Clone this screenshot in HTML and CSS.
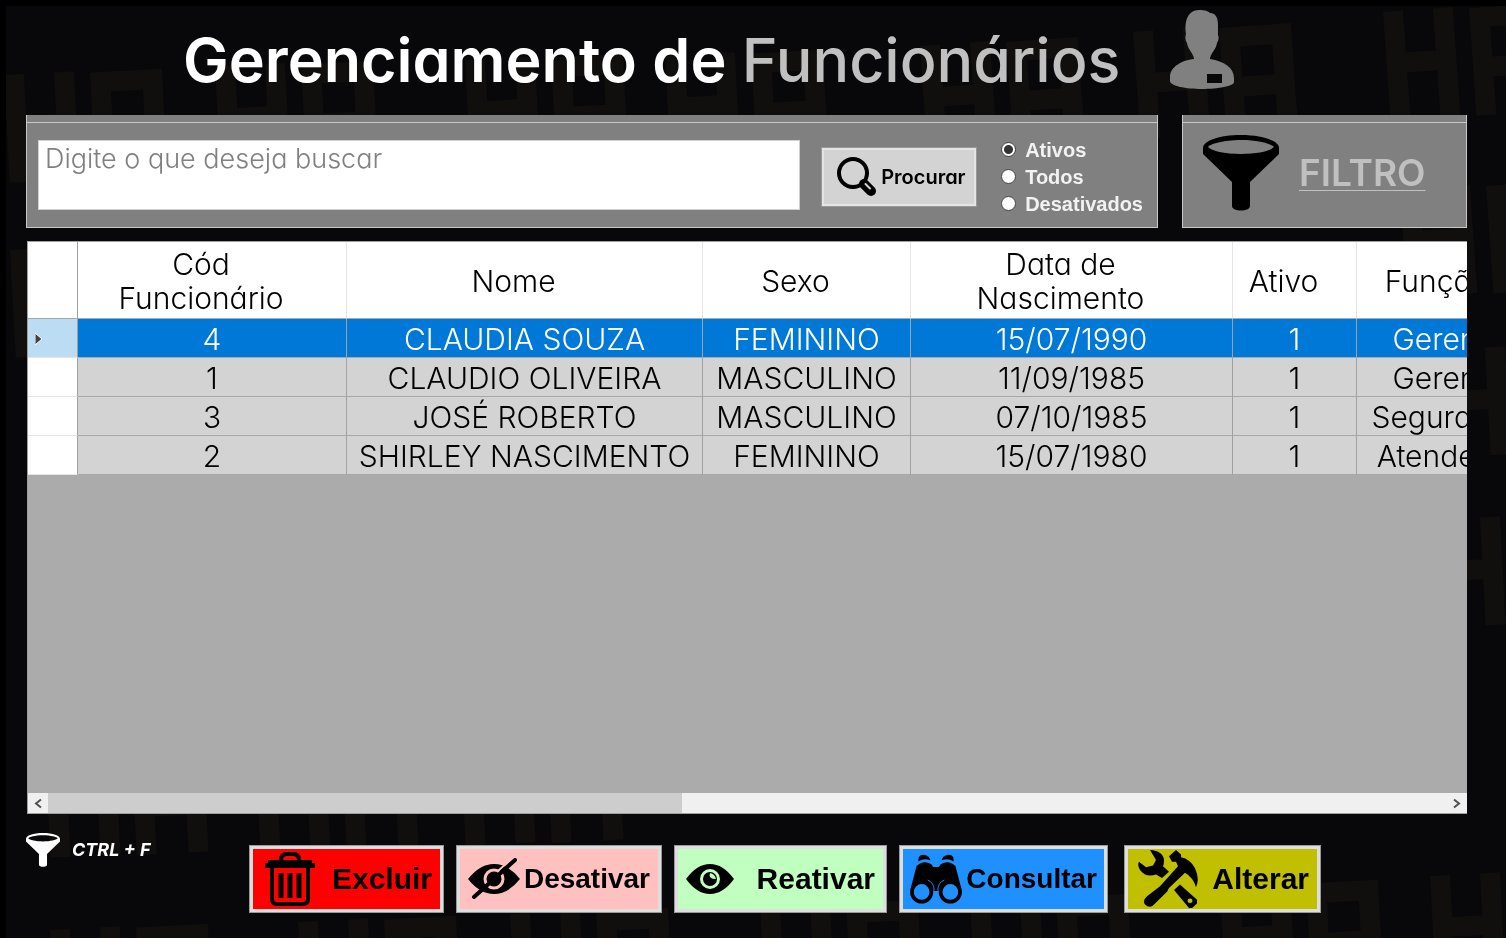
FILE: index.html
```html
<!DOCTYPE html>
<html lang="pt-BR">
<head>
<meta charset="utf-8">
<title>Gerenciamento de Funcionários</title>
<link rel="stylesheet" href="styles.css">
</head>
<body>
<svg class="backdrop" aria-hidden="true" preserveAspectRatio="xMidYMid slice" viewBox="0 0 1506 938">
  <defs>
    <path id="h" d="M0 0H20V42H50V0H70V108H50V62H20V108H0Z"/>
    <path id="a" fill-rule="evenodd" d="M0 0H72V108H52V70H20V108H0ZM20 20V50H52V20Z"/>
    <g id="ha"><use href="#h"/><use href="#a" x="86" y="2"/></g>
  </defs>
  <g fill="#100f0d">
    <use href="#ha" transform="translate(4 75) rotate(-3)"/>
    <use href="#ha" transform="translate(215 67) rotate(-3)"/>
    <use href="#ha" transform="translate(465 60) rotate(-3)"/>
    <use href="#ha" transform="translate(665 56) rotate(-3)"/>
    <use href="#ha" transform="translate(920 46) rotate(-4)"/>
    <use href="#ha" transform="translate(1133 32) rotate(-4)"/>
    <use href="#ha" transform="translate(1383 12) rotate(-4)"/>
    <use href="#ha" transform="translate(10 250) rotate(-3)"/>
    <use href="#ha" transform="translate(1400 190) rotate(-4)"/>
    <use href="#ha" transform="translate(1435 350) rotate(-3)"/>
    <use href="#ha" transform="translate(1430 520) rotate(-3)"/>
    <use href="#ha" transform="translate(45 750) rotate(-3)"/>
    <use href="#ha" transform="translate(255 746) rotate(-3)"/>
    <use href="#ha" transform="translate(460 738) rotate(-3)"/>
    <use href="#ha" transform="translate(50 930) rotate(-3)"/>
    <use href="#ha" transform="translate(298 922) rotate(-3)"/>
    <use href="#ha" transform="translate(510 914) rotate(-3)"/>
    <use href="#ha" transform="translate(760 906) rotate(-3)"/>
    <use href="#ha" transform="translate(970 900) rotate(-3)"/>
    <use href="#ha" transform="translate(1220 886) rotate(-3)"/>
    <use href="#h" transform="translate(1430 876) rotate(-3)"/>
  </g>
</svg>
<main class="window">
  <header class="heading">
    <h1 class="title">Gerenciamento de <span class="title-accent">Funcionários</span></h1>
    <svg class="person" viewBox="0 0 64 80" aria-hidden="true"><path fill="#808080" fill-rule="evenodd" d="M29 0C35 0 38 1 40 3C46 3 48 8 48 15V25C49 27 49 30 47 33C46 40 40 44 40 49C54 51 64 58 64 68V72C64 76 48 79 32 79C16 79 0 76 0 71V67C0 57 12 50 24 49C24 44 18 40 17 33C15 30 15 27 16 24C14 11 18 0 29 0ZM37 64V73H52V64Z"/></svg>
  </header>

  <div class="tools">
    <form class="panel search">
      <textarea class="search-box" aria-label="Buscar" placeholder="Digite o que deseja buscar"></textarea>
      <button class="search-button" type="button">
        <svg class="lens" viewBox="0 0 40 40" aria-hidden="true"><circle cx="16" cy="16" r="14" fill="none" stroke="#000" stroke-width="4"/><path d="M27 27L34 34" stroke="#000" stroke-width="10" stroke-linecap="round"/><path d="M28.500 27L33 31.500" stroke="#d3d3d3" stroke-width="2" stroke-linecap="round"/></svg>
        Procurar
      </button>
      <div class="options">
        <label class="option"><input class="radio" type="radio" name="status" checked>Ativos</label>
        <label class="option"><input class="radio" type="radio" name="status">Todos</label>
        <label class="option"><input class="radio" type="radio" name="status">Desativados</label>
      </div>
    </form>
    <section class="panel filter">
      <svg class="funnel" viewBox="0 0 76 76" aria-hidden="true"><path fill="#000" fill-rule="evenodd" d="M38 0C60 0 76 6 76 13V19L47 47V71C47 77 29 77 29 71V47L0 19V13C0 6 16 0 38 0ZM38 5C20 5 7 9 5 12C9 16 21 19 38 19C55 19 67 16 71 12C69 9 56 5 38 5Z"/></svg>
      <a class="filter-link" href="#">FILTRO</a>
    </section>
  </div>

  <section class="grid">
    <div class="grid-view">
      <table class="table">
        <colgroup><col class="col-mark"><col class="col-code"><col class="col-name"><col class="col-sex"><col class="col-date"><col class="col-active"><col class="col-role"></colgroup>
        <thead>
          <tr><th></th><th>Cód<br>Funcionário</th><th>Nome</th><th>Sexo</th><th>Data de<br>Nascimento</th><th>Ativo</th><th>Função</th></tr>
        </thead>
        <tbody>
          <tr class="selected"><td class="mark"><svg class="arrow" viewBox="0 0 8 12" aria-hidden="true"><path d="M0 0L7 6L0 12Z" fill="#404040" stroke="#fff"/></svg></td><td>4</td><td>CLAUDIA SOUZA</td><td>FEMININO</td><td>15/07/1990</td><td>1</td><td>Gerente</td></tr>
          <tr><td class="mark"></td><td>1</td><td>CLAUDIO OLIVEIRA</td><td>MASCULINO</td><td>11/09/1985</td><td>1</td><td>Gerente</td></tr>
          <tr><td class="mark"></td><td>3</td><td>JOSÉ ROBERTO</td><td>MASCULINO</td><td>07/10/1985</td><td>1</td><td>Segurança</td></tr>
          <tr><td class="mark"></td><td>2</td><td>SHIRLEY NASCIMENTO</td><td>FEMININO</td><td>15/07/1980</td><td>1</td><td>Atendente</td></tr>
        </tbody>
      </table>
    </div>
    <div class="scrollbar">
      <button class="scroll-button" type="button" aria-label="Rolar para a esquerda"><svg class="chevron" viewBox="0 0 8 10" aria-hidden="true"><path d="M7 1L2 5L7 9" fill="none" stroke="#505050" stroke-width="2"/></svg></button>
      <div class="track"><div class="thumb"></div></div>
      <button class="scroll-button" type="button" aria-label="Rolar para a direita"><svg class="chevron" viewBox="0 0 8 10" aria-hidden="true"><path d="M1 1L6 5L1 9" fill="none" stroke="#505050" stroke-width="2"/></svg></button>
    </div>
  </section>

  <footer class="footer">
    <div class="shortcut">
      <svg class="funnel-small" viewBox="0 0 76 76" aria-hidden="true"><path fill="#fff" fill-rule="evenodd" d="M38 0C60 0 76 6 76 13V19L47 47V71C47 77 29 77 29 71V47L0 19V13C0 6 16 0 38 0ZM38 5C20 5 7 9 5 12C9 16 21 19 38 19C55 19 67 16 71 12C69 9 56 5 38 5Z"/></svg>
      CTRL + F
    </div>
    <div class="actions">
      <button class="action delete" type="button">
        <svg class="icon-trash" viewBox="0 0 50 54" aria-hidden="true"><path d="M16 10V8Q16 2 22 2H28Q34 2 34 8V10" fill="none" stroke="#000" stroke-width="4"/><path d="M3 8H47V11H50V16H0V11H3Z"/><path d="M7 16V47Q7 52 12 52H38Q43 52 43 47V16" fill="none" stroke="#000" stroke-width="4"/><path d="M16 21V46M25 21V46M34 21V46" stroke="#000" stroke-width="5"/></svg>
        <span>Excluir</span></button>
      <button class="action disable" type="button">
        <svg class="icon-hidden" viewBox="0 0 52 42" aria-hidden="true"><path d="M0 21Q12 6 26 6Q40 6 52 21Q40 36 26 36Q12 36 0 21Z"/><circle cx="26" cy="21" r="9" fill="none" stroke="#ffc0c0" stroke-width="3"/><path d="M26 15Q25 19 29 20L33 18Q33 27 26 27Q20 27 20 21Q20 16 26 15Z"/><path d="M30 13L40 4" stroke="#ffc0c0" stroke-width="2"/><path d="M6 39L47 2" stroke="#000" stroke-width="4" stroke-linecap="round"/></svg>
        <span>Desativar</span></button>
      <button class="action enable" type="button">
        <svg class="icon-eye" viewBox="0 0 48 30" aria-hidden="true"><path d="M0 15Q11 0 24 0Q37 0 48 15Q37 30 24 30Q11 30 0 15Z"/><circle cx="24" cy="15" r="8.500" fill="none" stroke="#c0ffc0" stroke-width="3"/><path d="M24 9Q22 15 30 15Q29 10 24 9Z" fill="#c0ffc0"/></svg>
        <span>Reativar</span></button>
      <button class="action consult" type="button">
        <svg class="icon-binoculars" viewBox="0 0 56 54" aria-hidden="true"><path d="M9 5Q10 0 16 1Q21 2 22 7Q15 4 9 8ZM34 7Q35 2 40 1Q46 0 47 5V8Q41 4 34 7Z"/><path d="M7 13Q14 6 23 11L25 14H31L33 11Q42 6 49 13L55 36L32 38Q28 42 24 38L1 36Z"/><circle cx="12.500" cy="41" r="10.500" fill="#1e90ff" stroke="#000" stroke-width="4"/><circle cx="43.500" cy="41" r="10.500" fill="#1e90ff" stroke="#000" stroke-width="4"/><path d="M19 28Q26 31 26 39M37 28Q30 31 30 39" fill="none" stroke="#1e90ff"/></svg>
        <span>Consultar</span></button>
      <button class="action change" type="button">
        <svg class="icon-tools" viewBox="0 0 60 64" preserveAspectRatio="none" aria-hidden="true"><path d="M12 0Q25 1 26 11Q26 16 25 18L31 24L24 31L18 27Q8 31 2 22Q-1 17 1 13L8 19L15 17L18 11Z"/><path d="M36 44L42 38L59 55V59L54 64H51Z"/><circle cx="52" cy="56" r="2.500" fill="#c0c000"/><path d="M31 7L38 0L43 5V8Q52 10 57 20Q62 32 58 41Q55 30 47 25L31 42L29 46L16 60Q12 65 7 60Q4 56 9 51L22 40L40 18L38 13L34 13Z"/></svg>
        <span>Alterar</span></button>
    </div>
  </footer>
</main>
</body>
</html>
```

FILE: styles.css
```css
* { box-sizing: border-box; }

body {
  margin: 0;
  background: #08080a;
  font-family: Inter, "Liberation Sans", sans-serif;
  font-feature-settings: "cv11";
}

.backdrop {
  position: fixed;
  inset: 0;
  width: 100%;
  height: 100%;
  z-index: -1;
}

.window {
  display: flex;
  flex-direction: column;
  min-height: 100vh;
  padding: 0 39px 25px 20px;
  border-top: 6px solid #000;
  border-left: 6px solid #000;
}

.heading {
  display: flex;
  align-items: flex-start;
  gap: 50px;
  height: 109px;
  padding: 4px 0 0 157px;
}

.title {
  margin: 0;
  padding-top: 14px;
  color: #fff;
  font-size: 61px;
  line-height: 72px;
  font-weight: 600;
  white-space: nowrap;
}

.title-accent { color: #c0c0c0; font-weight: 500; }
.person { width: 64px; height: 80px; }

.tools { display: flex; gap: 24px; }

.panel {
  display: flex;
  align-items: center;
  height: 113px;
  border: 1px solid #c8c8c8;
  border-top: 0;
  background: linear-gradient(#808080 7px, #c8c8c8 7px, #c8c8c8 8px, #808080 8px);
}

.search { flex: 1; padding: 8px 14px 0 11px; }

.search-box {
  flex: 1;
  min-width: 0;
  height: 70px;
  padding: 2px 6px;
  border: 1px solid #d0d0d0;
  background: #fff;
  resize: none;
  font: 300 27px/32px Inter, sans-serif;
  font-feature-settings: "cv11";
  color: #333;
}

.search-box::placeholder { color: #808080; opacity: 1; }

.search-button {
  display: flex;
  align-items: center;
  gap: 4px;
  height: 60px;
  width: 156px;
  margin: 4px 24px 0 21px;
  padding: 0 0 0 13px;
  border: 3px solid #e4e4e4;
  outline: 1px solid #999;
  outline-offset: -1px;
  background: #d3d3d3;
  color: #000;
  font: 600 20px/24px Inter, sans-serif;
  font-feature-settings: "cv11";
}

.lens { width: 40px; height: 40px; }

.options { display: flex; flex-direction: column; gap: 3px; padding-top: 3px; }

.option {
  display: flex;
  align-items: center;
  gap: 9px;
  color: #f2f2f2;
  font: bold 20px/24px "Liberation Sans", sans-serif;
}

.radio {
  appearance: none;
  width: 15px;
  height: 15px;
  margin: 0;
  border: 1px solid #444;
  border-radius: 50%;
  background: #fff;
}

.radio:checked { background: radial-gradient(circle, #333 4px, #fff 5px); }

.filter { width: 285px; gap: 20px; padding: 3px 20px 0; }
.funnel { width: 76px; height: 76px; }

.filter-link {
  color: #c0c0c0;
  font-size: 37px;
  line-height: 42px;
  font-weight: 600;
  text-decoration-thickness: 1px;
  text-underline-offset: 4px;
}

.grid {
  display: flex;
  flex-direction: column;
  flex: 1;
  margin: 13px 0 0 1px;
  border: 1px solid #a0a0a0;
  border-right: 0;
  background: #ababab;
}

.grid-view { flex: 1; min-width: 0; overflow: hidden; display: grid; align-items: start; }

.table {
  width: 1512px;
  table-layout: fixed;
  border-collapse: separate;
  border-spacing: 0;
  font-size: 30px;
  line-height: 34px;
  font-weight: 300;
  text-align: center;
  color: #000;
}

.col-mark { width: 50px; }
.col-code { width: 269px; }
.col-name { width: 356px; }
.col-sex { width: 208px; }
.col-date { width: 322px; }
.col-active { width: 124px; }

.table th {
  height: 77px;
  padding: 2px 22px 0 0;
  border-right: 1px solid #e5e5e5;
  border-bottom: 1px solid #a8a8a8;
  background: #fff;
  font-weight: 300;
}

.table th:first-child { border-right-color: #a0a0a0; }

.table td {
  height: 39px;
  padding: 2px 0 0;
  border-right: 1px solid #a0a0a0;
  border-bottom: 1px solid #a8a8a8;
  background: #d3d3d3;
  white-space: nowrap;
}

.table .mark { background: #fff; border-bottom-color: #e5e5e5; text-align: left; }
.table .selected td { background: #0078d7; color: #fff; }
.table .selected .mark { background: #bcdcf4; padding-left: 7px; }
.arrow { display: block; width: 8px; height: 14px; }

.scrollbar { display: flex; height: 20px; background: #f0f0f0; }

.scroll-button {
  display: flex;
  align-items: center;
  justify-content: center;
  width: 20px;
  padding: 0;
  border: 0;
  background: #f0f0f0;
}

.chevron { width: 8px; height: 11px; }
.track { flex: 1; display: flex; }
.thumb { width: 45.300%; background: #cdcdcd; }

.footer { display: flex; align-items: flex-start; padding-top: 19px; }

.shortcut {
  display: flex;
  align-items: center;
  gap: 12px;
  width: 223px;
  color: #fff;
  font-size: 18px;
  line-height: 24px;
  font-weight: 700;
  font-style: italic;
}

.funnel-small { width: 34px; height: 34px; }

.actions { display: flex; gap: 12px; padding-top: 12px; }

.action {
  display: flex;
  align-items: center;
  justify-content: space-between;
  height: 68px;
  padding: 0 8px;
  border: 4px solid #dedede;
  outline: 1px solid #999;
  outline-offset: -1px;
  color: #000;
  font: bold 28px/34px "Liberation Sans", sans-serif;
}

.delete { width: 195px; background: #f00; padding-left: 12px; font-size: 30px; }
.disable { width: 206px; background: #ffc0c0; }
.enable { width: 213px; background: #c0ffc0; font-size: 30px; }
.consult { width: 209px; background: #1e90ff; padding: 0 7px 0 5px; }
.change { width: 197px; background: #c0c000; margin-left: 4px; padding-left: 10px; font-size: 30px; }

.icon-trash { width: 50px; height: 54px; }
.icon-hidden { width: 52px; height: 42px; }
.icon-eye { width: 48px; height: 30px; }
.icon-binoculars { width: 56px; height: 50px; }
.icon-tools { width: 60px; height: 58px; }
```
